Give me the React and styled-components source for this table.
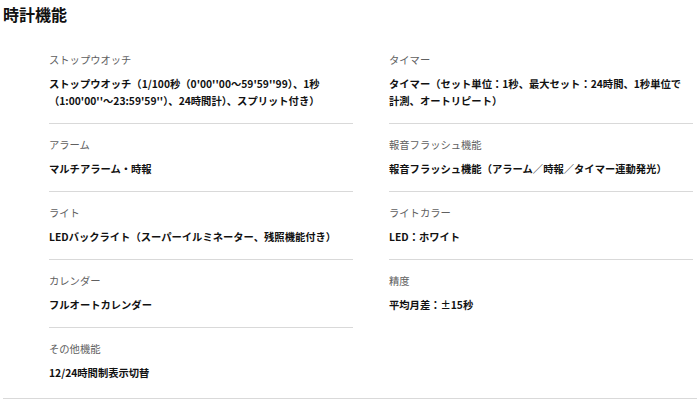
import React from 'react'
import styled, { createGlobalStyle } from 'styled-components'

const GlobalStyle = createGlobalStyle`
  body {
    margin: 0;
    background: #fff;
    font-family: "Noto Sans CJK JP", "Noto Sans", sans-serif;
    color: #111;
  }
`

const Section = styled.section`
  margin: 0 3px;
  padding-bottom: 3px;
  border-bottom: 1px solid #d9d9d9;
`

const Title = styled.h2`
  margin: 0;
  padding: 4px 0 0 0;
  font-size: 16px;
  line-height: 20px;
  font-weight: 700;
  color: #111;
`

const Columns = styled.div`
  display: grid;
  grid-template-columns: 304px 304px;
  column-gap: 36px;
  padding-left: 46px;
  margin-top: 15px;
  align-items: start;
`

const List = styled.dl`
  margin: 0;
  display: flex;
  flex-direction: column;
`

const Item = styled.div`
  padding: 14px 0 14.5px;
  & + & {
    border-top: 1px solid #d9d9d9;
  }
`

const Label = styled.dt`
  font-size: 10.3px;
  line-height: 14px;
  color: #606060;
`

const Value = styled.dd`
  margin: 7.5px 0 0;
  padding-right: 6px;
  font-size: 10.3px;
  line-height: 17px;
  font-weight: 700;
  color: #111;
`

const left = [
  ['ストップウオッチ', 'ストップウオッチ（1/100秒（0\'00\'\'00～59\'59\'\'99）、1秒（1:00\'00\'\'～23:59\'59\'\'）、24時間計）、スプリット付き）'],
  ['アラーム', 'マルチアラーム・時報'],
  ['ライト', 'LEDバックライト（スーパーイルミネーター、残照機能付き）'],
  ['カレンダー', 'フルオートカレンダー'],
  ['その他機能', '12/24時間制表示切替'],
]

const right = [
  ['タイマー', 'タイマー（セット単位：1秒、最大セット：24時間、1秒単位で計測、オートリピート）'],
  ['報音フラッシュ機能', '報音フラッシュ機能（アラーム／時報／タイマー連動発光）'],
  ['ライトカラー', 'LED：ホワイト'],
  ['精度', '平均月差：±15秒'],
]

const SpecList = ({ items }) => (
  <List>
    {items.map(([label, value]) => (
      <Item key={label}>
        <Label>{label}</Label>
        <Value>{value}</Value>
      </Item>
    ))}
  </List>
)

export default function App() {
  return (
    <>
      <GlobalStyle />
      <Section>
        <Title>時計機能</Title>
        <Columns>
          <SpecList items={left} />
          <SpecList items={right} />
        </Columns>
      </Section>
    </>
  )
}
